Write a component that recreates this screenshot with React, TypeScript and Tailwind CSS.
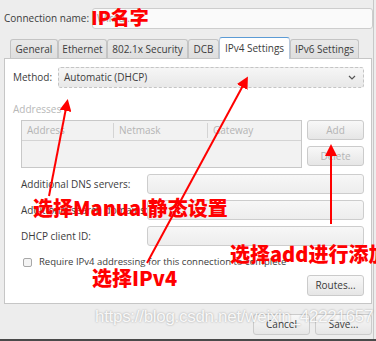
import React from 'react';

const ui = "font-['Open_Sans','DejaVu_Sans',sans-serif]";
const cjk = "font-['Noto_Sans_CJK_SC',sans-serif] font-black text-[#ff0000]";

function Field({ className = '' }: { className?: string }) {
  return (
    <div
      className={`h-[20px] rounded-[3px] border border-[#cdcdcd] bg-gradient-to-b from-[#f7f7f7] to-[#ededed] ${className}`}
    />
  );
}

function Btn({ label, disabled, className = '' }: { label: string; disabled?: boolean; className?: string }) {
  return (
    <div
      className={`flex h-[20px] w-[57px] items-center justify-center rounded-[3px] border border-[#cbcbcb] bg-gradient-to-b from-[#f8f8f8] to-[#e6e6e6] text-[10px] ${
        disabled ? 'text-[#b4b4b4]' : 'text-[#3a3a3a]'
      } ${className}`}
    >
      {label}
    </div>
  );
}

const tabs = [
  { name: 'General', w: 48 },
  { name: 'Ethernet', w: 49 },
  { name: '802.1x Security', w: 81 },
  { name: 'DCB', w: 31 },
  { name: 'IPv4 Settings', w: 71, active: true },
  { name: 'IPv6 Settings', w: 69 },
];

export default function App() {
  return (
    <div className={`relative h-[341px] w-[376px] overflow-hidden bg-[#ededed] ${ui} text-[#3c3c3c]`}>
      <div className="flex h-[339px] w-[374px] flex-col border-r border-[#c8c8c8]">
        {/* connection name */}
        <div className="flex items-center pl-[4px] pt-[8px]">
          <span className="w-[88px] whitespace-nowrap text-[10px]">Connection name:</span>
          <div className="flex h-[21px] w-[281px] items-center rounded-[3px] border border-[#cdcdcd] bg-[#fafafa] pl-[4px] text-[10px] text-[#9a9a9a]">
            Wired...
          </div>
        </div>

        {/* tabs */}
        <div className="mt-[8px] flex h-[21px] items-end pl-[10px]">
          {tabs.map((t) =>
            t.active ? (
              <div
                key={t.name}
                style={{ width: t.w }}
                className="relative z-10 -mb-px flex h-[22px] items-center justify-center whitespace-nowrap rounded-t-[3px] border border-b-0 border-[#b8c8dc] border-t-[#5b9bd5] bg-white text-[10px]"
              >
                {t.name}
              </div>
            ) : (
              <div
                key={t.name}
                style={{ width: t.w }}
                className="flex h-[19px] items-center justify-center whitespace-nowrap rounded-t-[3px] border border-b-0 border-[#c4c4c4] bg-gradient-to-b from-[#e9e9e9] to-[#dedede] text-[10px]"
              >
                {t.name}
              </div>
            ),
          )}
        </div>

        {/* panel */}
        <div className="ml-[4px] flex h-[246px] w-[368px] flex-col border border-[#c6c6c6] bg-white pl-[8px] pr-[7px]">
          <div className="mt-[8px] flex items-center">
            <span className="w-[45px] text-[10px]">Method:</span>
            <div className="flex h-[21px] flex-1 items-center justify-between rounded-[3px] border border-dashed border-[#c4c4c4] bg-gradient-to-b from-[#f6f6f6] to-[#e8e8e8] px-[5px] text-[10px]">
              <span>Automatic (DHCP)</span>
              <svg width="8" height="5" viewBox="0 0 8 5" className="mr-[2px]">
                <path d="M1 1l3 3 3-3" fill="none" stroke="#555" strokeWidth="1.2" />
              </svg>
            </div>
          </div>

          <span className="mt-[14px] text-[10px] leading-[14px] text-[#b8b8b8]">Addresses</span>

          <div className="mt-[4px] flex gap-[5px] pl-[8px]">
            <div className="flex h-[48px] w-[281px] flex-col border border-[#c8c8c8] bg-[#f2f2f2] text-[10px] text-[#b4b4b4]">
              <div className="flex h-[20px] items-center border-b border-[#d4d4d4]">
                <span className="w-[92px] border-r border-[#d4d4d4] pl-[5px]">Address</span>
                <span className="w-[94px] border-r border-[#d4d4d4] pl-[5px]">Netmask</span>
                <span className="pl-[5px]">Gateway</span>
              </div>
            </div>
            <div className="flex flex-col gap-[6px]">
              <Btn label="Add" disabled />
              <Btn label="Delete" disabled />
            </div>
          </div>

          <div className="mt-[6px] flex flex-col gap-[6px] pl-[8px] text-[10px]">
            {['Additional DNS servers:', 'Additional search domains:', 'DHCP client ID:'].map((l) => (
              <div key={l} className="flex items-center">
                <span className="w-[126px] whitespace-nowrap">{l}</span>
                <Field className="w-[217px]" />
              </div>
            ))}
          </div>

          <div className="mt-[9px] flex items-center pl-[10px] text-[9.5px]">
            <div className="h-[9px] w-[9px] rounded-[2px] border border-[#a8a8a8] bg-[#f4f4f4]" />
            <span className="ml-[7px] whitespace-nowrap">Require IPv4 addressing for this connection to complete</span>
          </div>

          <div className="mt-[6px] flex justify-end">
            <Btn label="Routes..." className="h-[21px]" />
          </div>
        </div>

        {/* footer */}
        <div className="mt-[10px] flex justify-end gap-[5px] pr-[1px]">
          <Btn label="Cancel" className="h-[21px]" />
          <Btn label="Save..." className="h-[21px]" />
        </div>
      </div>
      <div className="h-[2px] w-full bg-[#4a4a4a]" />

      {/* watermark */}
      <div className="pointer-events-none absolute left-[95px] top-[304px] whitespace-nowrap font-['Liberation_Sans',sans-serif] text-[17px] tracking-[-0.3px] text-white/90 [text-shadow:0_0_2px_rgba(0,0,0,0.35)]">
        https://blog.csdn.net/weixin_42221657
      </div>

      {/* annotations */}
      <svg className="pointer-events-none absolute left-0 top-0" width="376" height="341">
        <defs>
          <marker id="ah" markerWidth="6" markerHeight="6" refX="4" refY="3" orient="auto">
            <path d="M0 0L6 3L0 6z" fill="#ff0000" />
          </marker>
        </defs>
        <line x1="49" y1="196" x2="67" y2="103" stroke="#ff0000" strokeWidth="2" markerEnd="url(#ah)" />
        <line x1="147" y1="263" x2="246" y2="80" stroke="#ff0000" strokeWidth="2" markerEnd="url(#ah)" />
        <line x1="331" y1="224" x2="331" y2="148" stroke="#ff0000" strokeWidth="2" markerEnd="url(#ah)" />
      </svg>
      <div className={`absolute left-[91px] top-[5px] text-[19px] leading-[24px] ${cjk}`}>IP名字</div>
      <div className={`absolute left-[33px] top-[195px] whitespace-nowrap text-[20px] leading-[26px] ${cjk}`}>选择Manual静态设置</div>
      <div className={`absolute left-[92px] top-[265px] whitespace-nowrap text-[20px] leading-[26px] ${cjk}`}>选择IPv4</div>
      <div className={`absolute left-[230px] top-[241px] whitespace-nowrap text-[20px] leading-[26px] ${cjk}`}>选择add进行添加</div>
    </div>
  );
}
